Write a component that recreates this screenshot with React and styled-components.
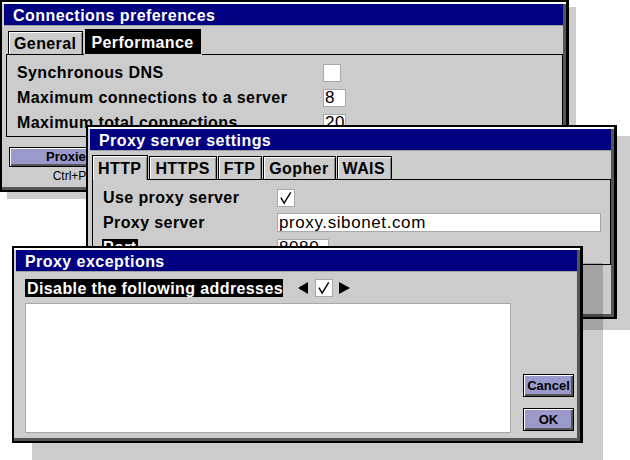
import React from 'react';
import styled, { createGlobalStyle } from 'styled-components';

const GlobalStyle = createGlobalStyle`
  html, body {
    margin: 0;
    padding: 0;
    background: #fff;
  }
  body {
    font-family: "Liberation Sans", Arial, sans-serif;
    color: #000;
  }
`;

const Desktop = styled.div`
  position: relative;
  width: 630px;
  height: 460px;
  overflow: hidden;
  background: #fff;
`;

const Window = styled.div`
  position: absolute;
  left: ${(p) => p.$x}px;
  top: ${(p) => p.$y}px;
  width: ${(p) => p.$w}px;
  height: ${(p) => p.$h}px;
  box-sizing: border-box;
  display: flex;
  flex-direction: column;
  background: #ccc;
  border: 2px solid #000;
  border-right-width: 3px;
  padding: 2px 3px 3px 2px;
  box-shadow: inset 0 2px 0 #fff, inset -3px -3px 0 #555,
    ${(p) => p.$sx}px ${(p) => p.$sy}px 0 rgba(0, 0, 0, 0.2);
`;

const TitleBar = styled.div`
  flex: none;
  height: 21px;
  background: #000080;
  border-bottom: 1px solid #a0a0a0;
  color: #fff;
  font-size: 16px;
  font-weight: bold;
  letter-spacing: 0.45px;
  line-height: 23px;
  padding-left: 9px;
  white-space: nowrap;
  overflow: hidden;
`;

const Body = styled.div`
  display: flex;
  flex-direction: column;
  padding: ${(p) => p.$pad || '0'};
`;

const TabStrip = styled.div`
  display: flex;
  align-items: flex-end;
  gap: ${(p) => p.$gap}px;
  height: 25px;
  margin: 3px 0 0 ${(p) => p.$indent}px;
`;

const Tab = styled.div`
  box-sizing: border-box;
  height: ${(p) => (p.$active ? 25 : 23)}px;
  padding: 0 6px 0 5px;
  border: 1px solid #000;
  border-bottom: none;
  font-size: 16px;
  font-weight: bold;
  letter-spacing: 0.4px;
  line-height: ${(p) => (p.$active ? 25 : 23)}px;
  white-space: nowrap;
  background: ${(p) => (p.$focus ? '#000' : '#ccc')};
  color: ${(p) => (p.$focus ? '#fff' : '#000')};
  box-shadow: ${(p) =>
    p.$focus ? '0 0 0 1px #ccc' : 'inset 1px 1px 0 #fff, inset -1px 0 0 #888'};
  position: relative;
  z-index: ${(p) => (p.$active && !p.$focus ? 1 : 0)};
  margin-bottom: ${(p) => (p.$active && !p.$focus ? -1 : 0)}px;
  padding-bottom: ${(p) => (p.$active && !p.$focus ? 1 : 0)}px;
`;

const Panel = styled.div`
  display: flex;
  flex-direction: column;
  border: 1px solid #000;
  padding: 5px 0 ${(p) => p.$pb || 1}px 9px;
`;

const Row = styled.div`
  display: flex;
  align-items: center;
  height: 25px;
`;

const Label = styled.div`
  box-sizing: border-box;
  width: ${(p) => p.$w}px;
  flex: none;
  font-size: 16px;
  font-weight: bold;
  letter-spacing: 0.4px;
  white-space: nowrap;
  & > span {
    padding: 0 1px;
    background: ${(p) => (p.$hl ? '#000' : 'transparent')};
    color: ${(p) => (p.$hl ? '#fff' : '#000')};
  }
`;

const Field = styled.div`
  box-sizing: border-box;
  width: ${(p) => p.$w}px;
  height: ${(p) => p.$h || 18}px;
  flex: none;
  margin-left: ${(p) => p.$ml || 0}px;
  background: #fff;
  border: 1px solid #a8a8a8;
  font-size: 17px;
  letter-spacing: 0.6px;
  line-height: ${(p) => (p.$h || 18) - 1}px;
  padding-left: 1px;
  display: flex;
  align-items: center;
  justify-content: ${(p) => (p.$center ? 'center' : 'flex-start')};
  white-space: nowrap;
  overflow: hidden;
`;

const ButtonBar = styled.div`
  display: flex;
  flex-direction: column;
  align-items: center;
  width: 121px;
  margin: 10px 0 0 3px;
`;

const Button = styled.div`
  box-sizing: border-box;
  width: ${(p) => p.$w}px;
  height: ${(p) => p.$h}px;
  background: #9999cc;
  border: 1px solid #000;
  box-shadow: inset 1px 1px 0 #fff, inset -2px -2px 0 #555;
  font-size: 13px;
  font-weight: bold;
  display: flex;
  align-items: center;
  justify-content: center;
  padding-bottom: 1px;
`;

const Hotkey = styled.div`
  font-size: 12px;
  line-height: 14px;
  margin-top: 2px;
`;

const ChoiceRow = styled.div`
  display: flex;
  align-items: center;
  height: 18px;
  margin-top: 7px;
`;

const ChoiceLabel = styled.div`
  box-sizing: border-box;
  width: 258px;
  height: 18px;
  background: #000;
  color: #fff;
  font-size: 16px;
  font-weight: bold;
  letter-spacing: 0.4px;
  line-height: 19px;
  padding-left: 2px;
  white-space: nowrap;
`;

const Arrow = styled.svg`
  display: block;
  flex: none;
  margin-left: ${(p) => p.$ml}px;
`;

const ListArea = styled.div`
  display: flex;
  gap: 12px;
  margin-top: 6px;
`;

const ListBox = styled.div`
  box-sizing: border-box;
  width: 486px;
  height: 130px;
  background: #fff;
  border: 1px solid #a8a8a8;
`;

const ButtonColumn = styled.div`
  display: flex;
  flex-direction: column;
  justify-content: flex-end;
  gap: 11px;
  padding-bottom: 2px;
`;

const Check = () => (
  <svg width="16" height="16" viewBox="0 0 16 16">
    <path d="M2 7.5 L5.5 13.5 L12.5 2" fill="none" stroke="#000" strokeWidth="1.5" />
  </svg>
);

const App = () => (
  <Desktop>
    <GlobalStyle />

    <Window $x={0} $y={0} $w={569} $h={192} $sx={7} $sy={7}>
      <TitleBar>Connections preferences</TitleBar>
      <Body $pad="0 0 0 2px">
        <TabStrip $gap={2} $indent={2}>
          <Tab>General</Tab>
          <Tab $active $focus>Performance</Tab>
        </TabStrip>
        <Panel>
          <Row>
            <Label $w={307}><span>Synchronous DNS</span></Label>
            <Field $w={18} />
          </Row>
          <Row>
            <Label $w={307}><span>Maximum connections to a server</span></Label>
            <Field $w={23}>8</Field>
          </Row>
          <Row>
            <Label $w={307}><span>Maximum total connections</span></Label>
            <Field $w={23}>20</Field>
          </Row>
        </Panel>
        <ButtonBar>
          <Button $w={121} $h={20}>Proxies</Button>
          <Hotkey>Ctrl+P</Hotkey>
        </ButtonBar>
      </Body>
    </Window>

    <Window $x={86} $y={125} $w={531} $h={194} $sx={13} $sy={11}>
      <TitleBar>Proxy server settings</TitleBar>
      <Body $pad="0 0 0 2px">
        <TabStrip $gap={1} $indent={0}>
          <Tab $active>HTTP</Tab>
          <Tab>HTTPS</Tab>
          <Tab>FTP</Tab>
          <Tab>Gopher</Tab>
          <Tab>WAIS</Tab>
        </TabStrip>
        <Panel $pb={4}>
          <Row>
            <Label $w={175}><span>Use proxy server</span></Label>
            <Field $w={18} $center>
              <Check />
            </Field>
          </Row>
          <Row>
            <Label $w={175}><span>Proxy server</span></Label>
            <Field $w={324} $h={19}>proxy.sibonet.com</Field>
          </Row>
          <Row>
            <Label $w={175} $hl><span>Port</span></Label>
            <Field $w={52}>8080</Field>
          </Row>
        </Panel>
      </Body>
    </Window>

    <Window $x={12} $y={246} $w={571} $h={197} $sx={20} $sy={17}>
      <TitleBar>Proxy exceptions</TitleBar>
      <Body $pad="0 3px 0 9px">
        <ChoiceRow>
          <ChoiceLabel>Disable the following addresses</ChoiceLabel>
          <Arrow $ml={15} width="10" height="12" viewBox="0 0 10 12">
            <polygon points="10,0 10,12 0,6" fill="#000" />
          </Arrow>
          <Field $w={18} $ml={7} $center>
            <Check />
          </Field>
          <Arrow $ml={6} width="11" height="12" viewBox="0 0 11 12">
            <polygon points="0,0 0,12 11,6" fill="#000" />
          </Arrow>
        </ChoiceRow>
        <ListArea>
          <ListBox />
          <ButtonColumn>
            <Button $w={51} $h={23}>Cancel</Button>
            <Button $w={51} $h={23}>OK</Button>
          </ButtonColumn>
        </ListArea>
      </Body>
    </Window>
  </Desktop>
);

export default App;
